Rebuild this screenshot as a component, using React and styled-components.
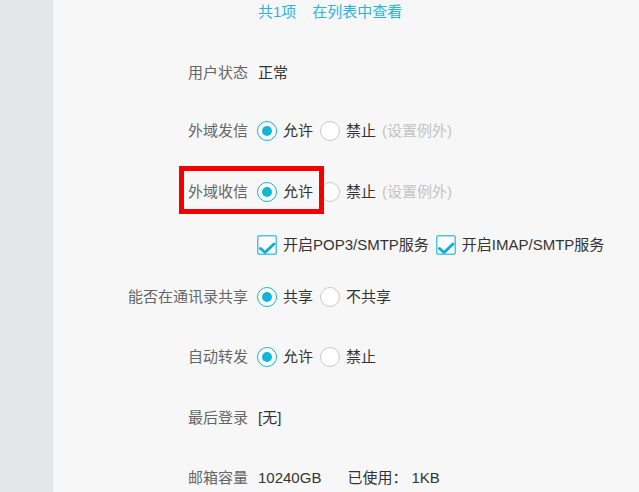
import React from "react";
import styled, { createGlobalStyle } from "styled-components";

const Global = createGlobalStyle`
  html, body { margin: 0; padding: 0; }
  body {
    background: #f7f7f7;
    font-family: "Liberation Sans", "Noto Sans CJK SC", sans-serif;
    font-size: 15px;
    color: #333;
  }
`;

const Page = styled.div`
  display: flex;
  width: 639px;
  height: 492px;
  overflow: hidden;
`;

const Sidebar = styled.aside`
  width: 53px;
  flex: none;
  background: #e4e7ea;
`;

const Main = styled.main`
  flex: 1;
  background: #f7f7f7;
  display: flex;
  flex-direction: column;
`;

const Row = styled.div`
  position: relative;
  display: flex;
  align-items: center;
  height: 20px;
  line-height: 20px;
  margin-top: ${(p) => p.$mt || 0}px;
  white-space: nowrap;
`;

const Label = styled.div`
  width: 195px;
  flex: none;
  text-align: right;
  color: #666;
  margin-right: 10px;
`;

const Value = styled.div`
  display: flex;
  align-items: center;
  color: #333;
`;

const Link = styled.a`
  color: #2cb3da;
  text-decoration: none;
  margin-right: ${(p) => p.$mr || 0}px;
`;

const Option = styled.label`
  display: flex;
  align-items: center;
  gap: 6px;
  margin-right: 7px;
  color: #333;
  &:first-child {
    margin-left: -1px;
  }
`;

const RadioCircle = styled.span`
  box-sizing: border-box;
  width: 20px;
  height: 20px;
  border-radius: 50%;
  border: 1.5px solid ${(p) => (p.$on ? "#14b4d8" : "#c9c9c9")};
  background: #fff;
  display: flex;
  align-items: center;
  justify-content: center;
  &::after {
    content: "";
    width: 10px;
    height: 10px;
    border-radius: 50%;
    background: #14b4d8;
    display: ${(p) => (p.$on ? "block" : "none")};
  }
`;

const Hint = styled.span`
  color: #c4c4c4;
  margin-left: -1px;
`;

const Muted = styled.span`
  margin-left: ${(p) => p.$ml || 0}px;
`;

const Highlight = styled.div`
  position: absolute;
  left: 126px;
  top: -16px;
  width: 145px;
  height: 48px;
  box-sizing: border-box;
  border: 5px solid #f50000;
  pointer-events: none;
`;

const Radio = ({ on, children }) => (
  <Option>
    <RadioCircle $on={on} />
    {children}
  </Option>
);

const CheckIcon = () => (
  <svg width="20" height="20" viewBox="0 0 20 20">
    <rect x="0.75" y="0.75" width="18.5" height="18.5" rx="1.5" fill="#fff" stroke="#4cc4e2" strokeWidth="1.5" />
    <path d="M3.5 13.5 L8 17.5 L17 9" fill="none" stroke="#12acd6" strokeWidth="3" strokeLinecap="round" strokeLinejoin="round" />
  </svg>
);

const Check = ({ children }) => (
  <Option>
    <CheckIcon />
    {children}
  </Option>
);

export default function App() {
  return (
    <>
      <Global />
      <Page>
        <Sidebar />
        <Main>
          <Row $mt={2}>
            <Label />
            <Value>
              <Link $mr={16}>共1项</Link>
              <Link>在列表中查看</Link>
            </Value>
          </Row>
          <Row $mt={41}>
            <Label>用户状态</Label>
            <Value>正常</Value>
          </Row>
          <Row $mt={38}>
            <Label>外域发信</Label>
            <Value>
              <Radio on>允许</Radio>
              <Radio>禁止</Radio>
              <Hint>(设置例外)</Hint>
            </Value>
          </Row>
          <Row $mt={41}>
            <Label>外域收信</Label>
            <Value>
              <Radio on>允许</Radio>
              <Radio>禁止</Radio>
              <Hint>(设置例外)</Hint>
            </Value>
            <Highlight />
          </Row>
          <Row $mt={33}>
            <Label />
            <Value>
              <Check>开启POP3/SMTP服务</Check>
              <Check>开启IMAP/SMTP服务</Check>
            </Value>
          </Row>
          <Row $mt={32}>
            <Label>能否在通讯录共享</Label>
            <Value>
              <Radio on>共享</Radio>
              <Radio>不共享</Radio>
            </Value>
          </Row>
          <Row $mt={40}>
            <Label>自动转发</Label>
            <Value>
              <Radio on>允许</Radio>
              <Radio>禁止</Radio>
            </Value>
          </Row>
          <Row $mt={41}>
            <Label>最后登录</Label>
            <Value>[无]</Value>
          </Row>
          <Row $mt={40}>
            <Label>邮箱容量</Label>
            <Value>
              10240GB
              <Muted $ml={26}>已使用：</Muted>
              <Muted $ml={4}>1KB</Muted>
            </Value>
          </Row>
        </Main>
      </Page>
    </>
  );
}
